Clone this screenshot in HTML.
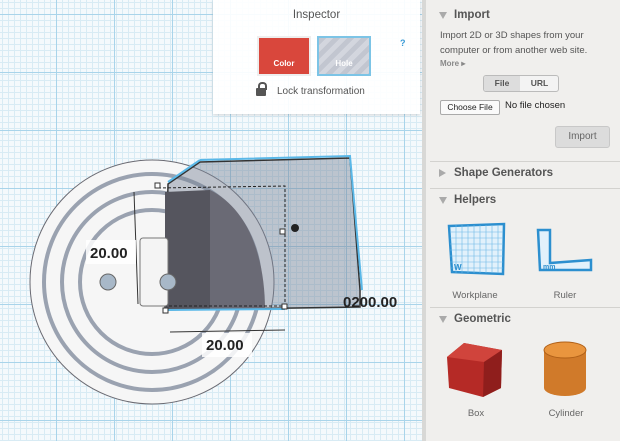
<!DOCTYPE html>
<html><head><meta charset="utf-8"><style>
body{margin:0;width:620px;height:441px;overflow:hidden;font-family:"Liberation Sans",sans-serif;position:relative;background:#fff}
#canvas{position:absolute;left:0;top:0;width:422px;height:441px;background-color:#f4f9fc;
background-image:linear-gradient(#a9d4ea 1px,transparent 1px),linear-gradient(90deg,#a9d4ea 1px,transparent 1px),linear-gradient(#d8ebf4 1px,transparent 1px),linear-gradient(90deg,#d8ebf4 1px,transparent 1px);
background-size:58px 58px,58px 58px,6px 6px,6px 6px;background-position:-20px 14px,-2px 0,0 2px,2px 0}
#insp{position:absolute;left:213px;top:0;width:207px;height:114px;background:rgba(255,255,255,.92);box-shadow:0 1px 3px rgba(0,0,0,.15)}
#panel{position:absolute;left:422px;top:0;width:198px;height:441px;background:#f0efed;border-left:4px solid #d8d8d6;box-sizing:border-box;color:#555}
.h{position:absolute;left:14px;font-weight:bold;font-size:11.5px;color:#555}
.h:before{content:"";position:absolute;left:-1px;top:3px;border-left:4px solid transparent;border-right:4px solid transparent;border-top:7px solid #aaa}
.h.c:before{border-top:4px solid transparent;border-bottom:4px solid transparent;border-left:7px solid #aaa;border-right:0;top:2px}
.h span{margin-left:14px}
.div{position:absolute;left:4px;right:0;height:1px;background:#d3d2cf}
.lbl{position:absolute;font-size:9.5px;color:#666;text-align:center;width:70px}
</style></head><body>
<div id="canvas">
<svg width="422" height="441" style="position:absolute;left:0;top:0">
<g stroke="#555" fill="none">
<circle cx="152" cy="282" r="122" fill="#f6f6f6" stroke="#6a6a72"/>
<circle cx="152" cy="282" r="108" stroke="#9aa2b0" stroke-width="4"/>
<circle cx="152" cy="282" r="90" stroke="#9aa2b0" stroke-width="4"/>
<circle cx="152" cy="282" r="72" stroke="#9aa2b0" stroke-width="4"/>
</g>
<path d="M168 184 L200 162 L350 158 L360 290 L360 307 L165 310 Z" fill="rgba(120,130,150,.45)" stroke="#333" stroke-width="1.5"/>
<path d="M165 192 L210 190 L210 310 L165 310 Z" fill="#55555e"/>
<path d="M210 190 C250 210 265 260 265 310 L210 310 Z" fill="#6a6a75"/>
<path d="M158 188 L285 186 L285 306 L158 306" fill="none" stroke="#222" stroke-dasharray="3 2"/>
<path d="M200 160 L350 156 L362 290" fill="none" stroke="#5ab8e8" stroke-width="2"/>
<path d="M168 182 L200 160" stroke="#5ab8e8" stroke-width="2"/>
<path d="M165 310 L285 309" stroke="#5ab8e8" stroke-width="2"/>
<rect x="140" y="238" width="28" height="68" rx="3" fill="#f4f4f4" stroke="#777"/>
<circle cx="108" cy="282" r="8" fill="#a8b8c8" stroke="#666"/>
<circle cx="168" cy="282" r="8" fill="#a8b8c8" stroke="#666"/>
<line x1="134" y1="192" x2="138" y2="304" stroke="#333"/>
<line x1="170" y1="332" x2="285" y2="330" stroke="#333"/>
<rect x="155" y="183" width="5" height="5" fill="#fff" stroke="#333"/>
<rect x="280" y="229" width="5" height="5" fill="#fff" stroke="#333"/>
<rect x="163" y="308" width="5" height="5" fill="#fff" stroke="#333"/>
<rect x="282" y="304" width="5" height="5" fill="#fff" stroke="#333"/>
<circle cx="295" cy="228" r="4" fill="#222"/>
<rect x="86" y="240" width="50" height="24" fill="#fff" opacity=".85"/>
<text x="90" y="258" font-size="15" font-weight="bold" font-family="Liberation Sans" fill="#222">20.00</text>
<rect x="202" y="333" width="50" height="24" fill="#fff" opacity=".85"/>
<text x="206" y="350" font-size="15" font-weight="bold" font-family="Liberation Sans" fill="#222">20.00</text>
<text x="343" y="307" font-size="15" font-weight="bold" font-family="Liberation Sans" fill="#222">0200.00</text>
</svg>
</div>
<div id="insp">
<div style="position:absolute;top:9px;width:100%;text-align:center;font-size:11.5px;color:#555">Inspector</div>
<div style="position:absolute;left:44px;top:36px;width:50px;height:36px;border:2px solid #eee;background:#d9473c;color:#fff;font-size:8px;font-weight:bold;text-align:center;line-height:52px">Color</div>
<div style="position:absolute;left:104px;top:36px;width:50px;height:36px;border:2px solid #7cc4e6;background:repeating-linear-gradient(135deg,#c2c6d0 0 5px,#d3d6de 5px 10px);color:#fff;font-size:8px;font-weight:bold;text-align:center;line-height:52px">Hole</div>
<div style="position:absolute;left:187px;top:38px;font-size:9px;font-weight:bold;color:#3a9ad6">?</div>
<div style="position:absolute;left:43px;top:88px;width:10px;height:8px;background:#555;border-radius:1px"></div>
<div style="position:absolute;left:45px;top:82px;width:5px;height:6px;border:2px solid #555;border-bottom:0;border-radius:4px 4px 0 0"></div>
<div style="position:absolute;left:64px;top:86px;font-size:10px;color:#555">Lock transformation</div>
</div>
<div id="panel">
<div class="h" style="top:9px"><span>Import</span></div>
<div style="position:absolute;left:14px;top:28px;font-size:9.5px;line-height:15px;color:#555">Import 2D or 3D shapes from your<br>computer or from another web site.</div>
<div style="position:absolute;left:14px;top:59px;font-size:8px;color:#888;font-weight:bold">More ▸</div>
<div style="position:absolute;left:57px;top:75px;width:74px;height:15px;border:1px solid #bbb;border-radius:3px;background:#f3f3f3;font-size:8.5px;font-weight:bold;color:#555;overflow:hidden">
<div style="position:absolute;left:0;top:0;width:36px;height:15px;background:#ddd;text-align:center;line-height:15px">File</div>
<div style="position:absolute;left:37px;top:0;width:37px;height:15px;text-align:center;line-height:15px">URL</div></div>
<div style="position:absolute;left:14px;top:100px;width:58px;height:13px;border:1px solid #aaa;border-radius:2px;background:#fafafa;font-size:8.5px;color:#222;text-align:center;line-height:13px">Choose File</div>
<div style="position:absolute;left:79px;top:100px;font-size:9.5px;color:#222">No file chosen</div>
<div style="position:absolute;left:129px;top:126px;width:53px;height:20px;border:1px solid #c8c8c8;border-radius:3px;background:#dcdcdc;font-size:10px;color:#666;text-align:center;line-height:20px">Import</div>
<div class="div" style="top:161px"></div>
<div class="h c" style="top:167px"><span>Shape Generators</span></div>
<div class="div" style="top:188px"></div>
<div class="h" style="top:194px"><span>Helpers</span></div>
<svg width="198" height="60" style="position:absolute;left:0;top:220px">
<path d="M23 6 L78 4 L77 54 L26 52 Z" fill="#e2f1fb" stroke="#2c8fcf" stroke-width="2.5"/>
<g stroke="#6cb8e6" stroke-width=".6"><path d="M30 5 V53 M36 5V53 M42 5V53 M48 5V53 M54 5V53 M60 5V53 M66 5V53 M72 5V53 M24 12H77 M24 18H77 M24 24H77 M24 30H77 M24 36H77 M24 42H77 M24 48H77"/></g>
<text x="28" y="50" font-size="8" font-weight="bold" fill="#2c8fcf" font-family="Liberation Sans">W</text>
<path d="M112 10 L124 10 L124 43 L165 40 L165 50 L114 50 Z" fill="#e2f1fb" stroke="#2c8fcf" stroke-width="2.5"/>
<text x="117" y="49" font-size="7" font-weight="bold" fill="#2c8fcf" font-family="Liberation Sans">mm</text>
</svg>
<div class="lbl" style="left:14px;top:290px">Workplane</div>
<div class="lbl" style="left:104px;top:290px">Ruler</div>
<div class="div" style="top:307px"></div>
<div class="h" style="top:313px"><span>Geometric</span></div>
<svg width="198" height="60" style="position:absolute;left:0;top:340px">
<path d="M21 17 L38 3 L76 10 L75 48 L57 57 L23 48 Z" fill="#b52a26"/>
<path d="M21 17 L38 3 L76 10 L58 22 Z" fill="#d0443c"/>
<path d="M58 22 L76 10 L75 48 L57 57 Z" fill="#8f1e1c"/>
<path d="M118 10 V48 A21 8 0 0 0 160 48 V10 Z" fill="#d07a2a"/>
<ellipse cx="139" cy="10" rx="21" ry="8" fill="#e9953e" stroke="#b06018"/>
</svg>
<div class="lbl" style="left:15px;top:408px">Box</div>
<div class="lbl" style="left:105px;top:408px">Cylinder</div>
</div>
</body></html>
